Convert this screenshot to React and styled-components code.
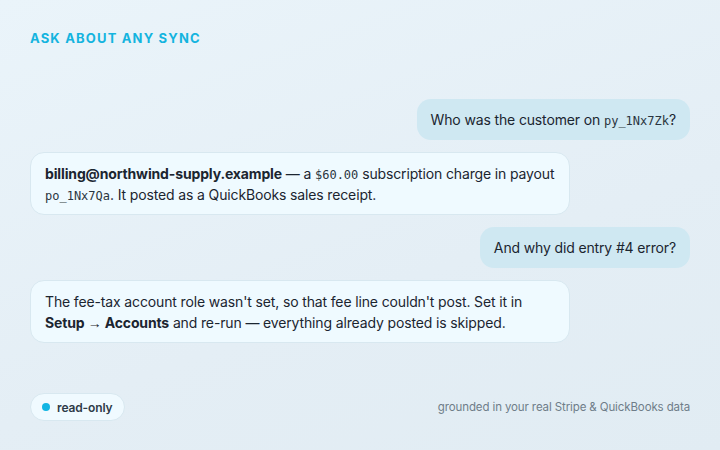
import React from 'react';
import styled, { createGlobalStyle } from 'styled-components';

const GlobalStyle = createGlobalStyle`
  html, body {
    margin: 0;
    padding: 0;
  }
  body {
    font-family: Inter, "Noto Sans", "Liberation Sans", sans-serif;
    background: linear-gradient(160deg, #eaf4fa 0%, #e4eef5 60%, #e1ecf3 100%);
  }
`;

const Page = styled.div`
  width: 720px;
  height: 450px;
  box-sizing: border-box;
  padding: 30px 30px 29px;
  display: flex;
  flex-direction: column;
`;

const Eyebrow = styled.h1`
  margin: 0;
  font-size: 13px;
  line-height: 16px;
  font-weight: 700;
  letter-spacing: 0.09em;
  color: #14b4df;
  text-transform: uppercase;
`;

const Thread = styled.div`
  margin-top: 53px;
  display: flex;
  flex-direction: column;
  gap: 12px;
`;

const Bubble = styled.div`
  box-sizing: border-box;
  font-size: 14px;
  line-height: 21px;
  letter-spacing: -0.01em;
  color: #1b2530;
  border-radius: 14px;
  padding: ${(p) => (p.$fromUser ? '10px 14px' : '9.5px 14px')};
  align-self: ${(p) => (p.$fromUser ? 'flex-end' : 'flex-start')};
  background: ${(p) => (p.$fromUser ? '#cfe8f2' : '#effaff')};
  border: ${(p) => (p.$fromUser ? 'none' : '1px solid #d8e8f0')};
  width: ${(p) => (p.$fromUser ? 'auto' : '540px')};

  b {
    font-weight: 700;
  }
`;

const Code = styled.code`
  font-family: "DejaVu Sans Mono", "Liberation Mono", monospace;
  font-size: 12px;
  line-height: 1;
  letter-spacing: 0;
  color: #2a3540;
`;

const Arrow = styled.span`
  font-family: "Liberation Sans", sans-serif;
  font-weight: 400;
  line-height: 1;
`;

const Footer = styled.div`
  margin-top: auto;
  display: flex;
  align-items: center;
  justify-content: space-between;
`;

const Pill = styled.div`
  display: inline-flex;
  align-items: center;
  gap: 7px;
  height: 28px;
  box-sizing: border-box;
  padding: 0 11px;
  border-radius: 14px;
  background: #f0faff;
  border: 1px solid #d8e8f0;
  font-size: 12px;
  font-weight: 600;
  letter-spacing: -0.01em;
  color: #2e3b48;
`;

const Dot = styled.span`
  width: 8px;
  height: 8px;
  border-radius: 50%;
  background: #12b5e3;
`;

const Note = styled.span`
  font-size: 11.5px;
  letter-spacing: -0.01em;
  color: #6f7d89;
`;

export default function App() {
  return (
    <>
      <GlobalStyle />
      <Page>
        <Eyebrow>Ask about any sync</Eyebrow>
        <Thread>
          <Bubble $fromUser>
            Who was the customer on <Code>py_1Nx7Zk</Code>?
          </Bubble>
          <Bubble>
            <b>billing@northwind-supply.example</b> — a <Code>$60.00</Code> subscription charge in payout{' '}
            <Code>po_1Nx7Qa</Code>. It posted as a QuickBooks sales receipt.
          </Bubble>
          <Bubble $fromUser>And why did entry #4 error?</Bubble>
          <Bubble>
            The fee-tax account role wasn't set, so that fee line couldn't post. Set it in{' '}
            <b>Setup <Arrow>→</Arrow> Accounts</b> and re-run — everything already posted is skipped.
          </Bubble>
        </Thread>
        <Footer>
          <Pill>
            <Dot />
            read-only
          </Pill>
          <Note>grounded in your real Stripe &amp; QuickBooks data</Note>
        </Footer>
      </Page>
    </>
  );
}
